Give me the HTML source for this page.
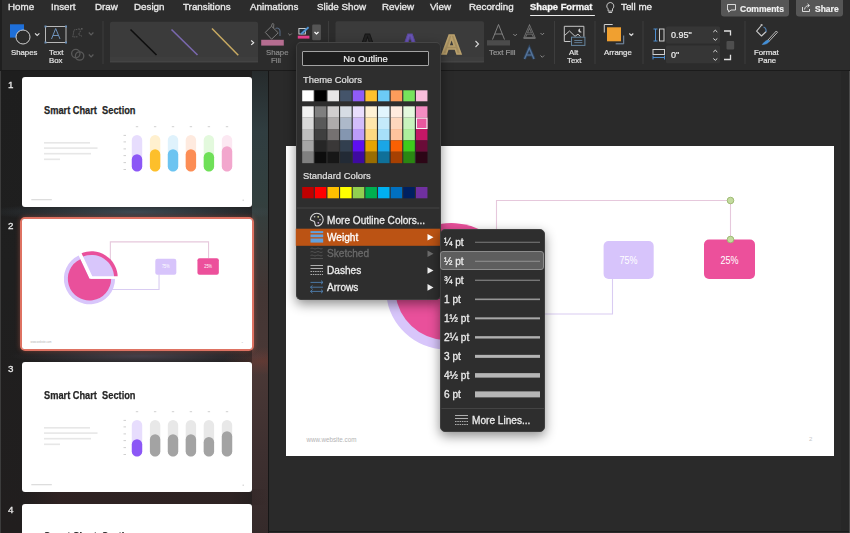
<!DOCTYPE html>
<html><head><meta charset="utf-8">
<style>
*{margin:0;padding:0;box-sizing:border-box}
html,body{width:850px;height:533px;overflow:hidden;background:#2a2a2a;font-family:"Liberation Sans",sans-serif;color:#e6e6e6}
.a{position:absolute}
.t{position:absolute;white-space:nowrap;line-height:1;-webkit-text-stroke:0.2px currentColor}
#top{left:0;top:0;width:850px;height:70px;background:#2c2c2c}
#topline{left:0;top:70px;width:850px;height:1px;background:#1b1b1b}
.tab{position:absolute;top:1.2px;font-size:9.8px;-webkit-text-stroke:0.35px #e8e8e8;color:#e8e8e8;white-space:nowrap;line-height:11px}
#pane{left:0;top:71px;width:268px;height:462px;overflow:hidden;background:
 radial-gradient(ellipse 150px 10px at 135px 141px, rgba(70,88,100,0.75), rgba(0,0,0,0) 100%),
 radial-gradient(ellipse 130px 9px at 140px 285px, rgba(85,78,92,0.7), rgba(0,0,0,0) 100%),
 radial-gradient(ellipse 40px 14px at 262px 290px, rgba(120,60,50,0.5), rgba(0,0,0,0) 100%),
 linear-gradient(90deg, rgba(0,0,0,0) 0, rgba(0,0,0,0) 22px, rgba(48,34,34,0.9) 60px, rgba(48,36,36,0.9) 230px, rgba(0,0,0,0) 268px) 0 418px/268px 16px no-repeat,
 linear-gradient(180deg, #262b2c 0, #303d40 60px, #33403f 130px, #433634 220px, #4a3836 300px, #3e3030 380px, #352a2a 462px) 252px 0/16px 462px no-repeat,
 linear-gradient(180deg, #1e1e1e 0, #1f1f1f 200px, #211e1e 462px)}
#paneline{left:268px;top:71px;width:1px;height:462px;background:#161616}
.thumb{position:absolute;left:22px;width:230px;height:130px;background:#fff;border-radius:3px;overflow:hidden}
.num{position:absolute;left:7.8px;font-size:9.8px;color:#e8e8e8;line-height:1;-webkit-text-stroke:0.3px #e8e8e8}
#slide{left:286px;top:146px;width:548px;height:310px;background:#fff;overflow:hidden}
.mi{font-size:10.1px;-webkit-text-stroke:0.3px currentColor}
.t,.tab,.num{will-change:transform}
</style></head><body>
<div class="a" id="top"></div>
<div class="a" id="topline"></div>
<!-- tabs -->
<div class="tab" style="left:8px">Home</div>
<div class="tab" style="left:51px">Insert</div>
<div class="tab" style="left:95px">Draw</div>
<div class="tab" style="left:134px">Design</div>
<div class="tab" style="left:183px">Transitions</div>
<div class="tab" style="left:250px">Animations</div>
<div class="tab" style="left:317px">Slide Show</div>
<div class="tab" style="left:382px">Review</div>
<div class="tab" style="left:430px">View</div>
<div class="tab" style="left:469px">Recording</div>
<div class="tab" style="left:530.4px;font-weight:bold;color:#fff;font-size:9.35px;top:1.6px">Shape Format</div>
<div class="a" style="left:530px;top:14.7px;width:64.5px;height:1.8px;background:#ececec;border-radius:1px"></div>
<div class="tab" style="left:621px">Tell me</div>

<!-- RIBBON -->
<svg class="a" style="left:0;top:0" width="850" height="70" viewBox="0 0 850 70">
 <!-- separators -->
 <g fill="#3d3d3d">
  <rect x="102.5" y="21" width="1" height="43"/>
  <rect x="328" y="21" width="1" height="43"/>
  <rect x="554" y="21" width="1" height="43"/>
  <rect x="594.5" y="21" width="1" height="43"/>
  <rect x="642.5" y="21" width="1" height="43"/>
  <rect x="744.5" y="21" width="1" height="43"/>
 </g>
 <!-- Comments / Share buttons -->
 <path d="M721 0 H789 V13.5 a3 3 0 0 1 -3 3 H724 a3 3 0 0 1 -3 -3Z" fill="#565656"/>
 <path d="M796 0 H843 V13.5 a3 3 0 0 1 -3 3 H799 a3 3 0 0 1 -3 -3Z" fill="#565656"/>
 <path d="M727.5 4.5 h8 v5.5 h-4.5 l-2.3 2 v-2 h-1.2z" fill="none" stroke="#e8e8e8" stroke-width="0.9"/>
 <path d="M802.5 7 v4.5 h7 v-2.5 M804.5 9.5 c0.5-3 2.5-4 4.5-4 M807.5 3.8 l2 1.7 l-2 1.7" fill="none" stroke="#e8e8e8" stroke-width="0.9"/>
 <!-- lightbulb -->
 <path d="M610.3 2.5 a3.6 3.6 0 0 1 2.2 6.4 v2.2 h-4.4 v-2.2 a3.6 3.6 0 0 1 2.2 -6.4z M608.5 12.5 h3.6" fill="none" stroke="#d8d8d8" stroke-width="0.9"/>

 <!-- Shapes -->
 <rect x="10" y="24.3" width="14" height="13.3" fill="#1e6fd9"/>
 <circle cx="23" cy="37" r="7" fill="#2c2c2c" stroke="#d0d0d0" stroke-width="1"/>
 <path d="M35 33.3 l2.2 2.2 l2.2 -2.2" fill="none" stroke="#e0e0e0" stroke-width="1.1"/>
 <!-- Text box -->
 <rect x="45.5" y="26.5" width="20.5" height="16" fill="none" stroke="#b8b8b8" stroke-width="1"/>
 <g fill="#6a8fb8"><rect x="44.5" y="25.5" width="2" height="2"/><rect x="65" y="25.5" width="2" height="2"/><rect x="44.5" y="41.5" width="2" height="2"/><rect x="65" y="41.5" width="2" height="2"/></g>
 <path d="M51.5 39 L55.7 28.5 L60 39 M53 35.5 h5.4" fill="none" stroke="#6f93bd" stroke-width="1"/>
 <!-- edit shape (disabled) -->
 <path d="M72.8 37 L74 30 L79.5 28.8 M77.5 36.8 L72.8 37 M79.5 28.8 L80.5 31 L78.5 34.5 L82.5 36.5" fill="none" stroke="#585858" stroke-width="1" stroke-dasharray="1.6 0.6"/>
 <rect x="81" y="28" width="1.6" height="1.6" fill="#5a5a5a"/>
 <path d="M88.8 32.5 l2.3 2.3 l2.3 -2.3" fill="none" stroke="#5c5c5c" stroke-width="1.2"/>
 <!-- merge (disabled) -->
 <circle cx="75.8" cy="53.6" r="4.2" fill="none" stroke="#585858" stroke-width="1.3"/>
 <circle cx="79.6" cy="56" r="4.2" fill="none" stroke="#585858" stroke-width="1.3"/>
 <path d="M88.8 54.5 l2.3 2.3 l2.3 -2.3" fill="none" stroke="#5c5c5c" stroke-width="1.2"/>

 <!-- Shape styles gallery -->
 <rect x="110" y="21.8" width="148" height="40.5" rx="2" fill="#3b3b3b"/>
 <rect x="110" y="57" width="148" height="5.3" fill="#3e3e3e"/><rect x="110" y="61.2" width="148" height="1.1" fill="#464646"/>
 <path d="M130.5 29.5 L156.5 55" stroke="#0e0e0e" stroke-width="1.6"/>
 <path d="M171.5 29.5 L197.5 55" stroke="#7a68ae" stroke-width="1.6"/>
 <path d="M212 28.5 L238.3 55.3" stroke="#c8aa62" stroke-width="1.5"/>
 <path d="M251.2 40.5 l2.5 2.2 l-2.5 2.2" fill="none" stroke="#e8e8e8" stroke-width="1.1"/>

 <!-- Shape fill (disabled) -->
 <path d="M265.3 32.4 L271.5 26.2 L278.2 32.8 L271.6 39.2 Z" fill="none" stroke="#7c7c7c" stroke-width="1"/>
 <path d="M271.5 26.2 L272.2 23.8 a1 1 0 0 1 1.6 0.4 L273.6 28" fill="none" stroke="#7c7c7c" stroke-width="0.9"/>
 <path d="M275.5 28.5 a3 3 0 0 1 4.5 2.8 L280 36" fill="none" stroke="#56677e" stroke-width="1.1"/>
 <rect x="261.2" y="39.8" width="22.6" height="5.8" fill="#b56d90"/>
 <path d="M288.2 33.5 l1.8 1.8 l1.8 -1.8" fill="none" stroke="#777" stroke-width="1"/>
 <!-- Shape outline -->
 <rect x="298.9" y="28.5" width="6.5" height="5.5" fill="#20303c" stroke="#d8d8d8" stroke-width="0.9"/>
 <path d="M301.2 34 L308.5 27.3" stroke="#3c7fc0" stroke-width="2.2"/>
 <path d="M301.2 34 L308.5 27.3" stroke="#7ab8e8" stroke-width="0.7"/>
 <rect x="297.8" y="35.7" width="11.6" height="2.9" fill="#e8408f"/>
 <rect x="312.2" y="24.6" width="8.7" height="15.6" rx="1.2" fill="#555"/>
 <path d="M314.5 32 l2 2 l2 -2" fill="none" stroke="#fff" stroke-width="1.2"/>

 <!-- WordArt gallery -->
 <rect x="335.5" y="21.2" width="148.5" height="41.2" rx="2" fill="#3b3b3b"/>
 <rect x="335.5" y="57" width="148.5" height="5.3" fill="#3e3e3e"/><rect x="335.5" y="61.2" width="148.5" height="1.1" fill="#464646"/>
 <text x="367.5" y="53" text-anchor="middle" font-family="Liberation Sans" font-weight="bold" font-size="27" fill="#222" stroke="#151515" stroke-width="0.8">A</text>
 <text x="410" y="53" text-anchor="middle" font-family="Liberation Sans" font-weight="bold" font-size="27" fill="#6a55b5" stroke="#5a48a0" stroke-width="0.8">A</text>
 <text x="451.5" y="53.5" text-anchor="middle" font-family="Liberation Sans" font-weight="bold" font-size="28" fill="#a48d5f" stroke="#b9a06c" stroke-width="1.6">A</text>
 <path d="M475.5 41 l3 3 l-3 3" fill="none" stroke="#d8d8d8" stroke-width="1.1"/>

 <!-- Text fill -->
 <path d="M492.5 39.5 L498.5 24.5 L504.5 39.5 M494.8 34 h7.4" fill="none" stroke="#8a8a8a" stroke-width="0.9"/>
 <rect x="487" y="40.2" width="23" height="5.3" fill="#4b4b4b"/>
 <path d="M513.3 34 l1.8 1.8 l1.8 -1.8" fill="none" stroke="#888" stroke-width="1"/>
 <!-- text outline -->
 <path d="M524.5 38 L529.5 26.5 L534.5 38 M526.5 33.5 h6" fill="none" stroke="#777" stroke-width="2.2"/><path d="M524.5 38 L529.5 26.5 L534.5 38 M526.5 33.5 h6" fill="none" stroke="#2c2c2c" stroke-width="0.7"/>
 <rect x="523.5" y="37" width="12" height="2" fill="#6a6a6a"/>
 <path d="M540.5 33 l1.8 1.8 l1.8 -1.8" fill="none" stroke="#888" stroke-width="1"/>
 <!-- text effects -->
 <path d="M524.5 59 L529.3 48 L534 59 M526.5 55 h5.6" fill="none" stroke="#2e4560" stroke-width="3"/>
 <path d="M524.5 59 L529.3 48 L534 59 M526.5 55 h5.6" fill="none" stroke="#58769c" stroke-width="1.2"/>
 <path d="M540.5 55.5 l1.8 1.8 l1.8 -1.8" fill="none" stroke="#888" stroke-width="1"/>

 <!-- Alt text -->
 <path d="M570.5 41.5 h-6.2 v-15.2 h19.6 v10.5" fill="none" stroke="#c8c8c8" stroke-width="1"/>
 <path d="M564.5 35.5 L569.5 31 L575 36.3 L578 34.2 L580.5 36.5" fill="none" stroke="#c8c8c8" stroke-width="1"/>
 <path d="M580.2 28.6 a2 2 0 1 0 1.6 3.3 a2.2 2.2 0 0 1 -1.6 -3.3z" fill="#d0d0d0"/>
 <rect x="571.5" y="37.2" width="13.4" height="8.2" fill="#2c2c2c" stroke="#66859f" stroke-width="1"/>
 <path d="M574.3 40.5 h8 M574.3 42.6 h8" stroke="#66859f" stroke-width="0.9"/>

 <!-- Arrange -->
 <path d="M604.3 32.5 v-8 h8.4" fill="none" stroke="#cfcfcf" stroke-width="1"/>
 <rect x="607" y="27.3" width="14" height="14" fill="#f0a030"/>
 <path d="M623.7 35.5 v8.3 h-8" fill="none" stroke="#7d93ad" stroke-width="1"/>
 <path d="M629.3 33.5 l2 2 l2 -2" fill="none" stroke="#e0e0e0" stroke-width="1.1"/>

 <!-- size icons -->
 <path d="M653.5 29 h4 M653.5 41 h4 M655.5 29 v12" fill="none" stroke="#4f8fd0" stroke-width="1"/>
 <rect x="659.5" y="29" width="4.5" height="12" fill="none" stroke="#d0d0d0" stroke-width="1"/>
 <rect x="653" y="49.5" width="11.5" height="5" fill="none" stroke="#d0d0d0" stroke-width="1"/>
 <path d="M653 57.5 h11.5 M653 55.5 v4 M664.5 55.5 v4" fill="none" stroke="#4f8fd0" stroke-width="1"/>
 <!-- fields -->
 <rect x="666" y="26.5" width="54" height="17" rx="1.5" fill="#363636"/>
 <rect x="666" y="45.6" width="54" height="17.6" rx="1.5" fill="#363636"/>
 <path d="M713.3 32 l2 -1.8 l2 1.8 M713.3 38.5 l2 1.8 l2 -1.8" fill="none" stroke="#dcdcdc" stroke-width="1"/>
 <path d="M713.3 52 l2 -1.8 l2 1.8 M713.3 58.5 l2 1.8 l2 -1.8" fill="none" stroke="#dcdcdc" stroke-width="1"/>
 <!-- lock -->
 <path d="M724 31 h6.5 v4.6" fill="none" stroke="#e0e0e0" stroke-width="1.3"/>
 <path d="M724 59.5 h6.5 v-4.8" fill="none" stroke="#e0e0e0" stroke-width="1.3"/>
 <rect x="726.5" y="41" width="7.7" height="8.4" rx="1" fill="#4e4e4e"/>

 <!-- Format pane -->
 <path d="M761.3 25.5 L756.6 31.2 L761.5 36 L766.2 31.5" fill="none" stroke="#c8c8c8" stroke-width="1.1" stroke-linejoin="round"/>
 <circle cx="761.6" cy="25" r="1.1" fill="#bdbdbd"/>
 <path d="M763.5 27 q3 1 2.6 5" fill="none" stroke="#4f7fb0" stroke-width="1.2"/>
 <path d="M776.3 31 L767.5 40.5 M777.5 32.3 L768.8 41.6" stroke="#c8c8c8" stroke-width="0.9"/>
 <path d="M776.3 31 l1.2 1.3" stroke="#c8c8c8" stroke-width="0.9"/>
 <path d="M768 40 c-2.5 0.5 -4 2.5 -5.8 4.6 c2.8 0 5.6 -1 7.2 -3.3z" fill="#3f8fdb" stroke="#5aa0e0" stroke-width="0.5"/>
</svg>
<!-- ribbon labels -->
<div class="t" style="left:11px;top:49px;font-size:7.8px;color:#e6e6e6">Shapes</div>
<div class="t" style="left:48.5px;top:49px;font-size:7.8px;color:#e6e6e6">Text</div>
<div class="t" style="left:49px;top:57px;font-size:7.8px;color:#e6e6e6">Box</div>
<div class="t" style="left:266px;top:49px;font-size:7.8px;color:#8a8a8a">Shape</div>
<div class="t" style="left:271px;top:57px;font-size:7.8px;color:#8a8a8a">Fill</div>
<div class="t" style="left:488.5px;top:49px;font-size:7.8px;color:#9a9a9a">Text Fill</div>
<div class="t" style="left:569px;top:49px;font-size:7.8px;color:#e6e6e6">Alt</div>
<div class="t" style="left:567px;top:57px;font-size:7.8px;color:#e6e6e6">Text</div>
<div class="t" style="left:604px;top:49px;font-size:7.8px;color:#e6e6e6">Arrange</div>
<div class="t" style="left:754px;top:49px;font-size:7.8px;color:#e6e6e6">Format</div>
<div class="t" style="left:758px;top:57px;font-size:7.8px;color:#e6e6e6">Pane</div>
<div class="t" style="left:671px;top:30.5px;font-size:9px;color:#f0f0f0">0.95"</div>
<div class="t" style="left:671px;top:50.5px;font-size:9px;color:#f0f0f0">0"</div>
<div class="t" style="left:740px;top:4.6px;font-size:8.5px;font-weight:bold;color:#f0f0f0">Comments</div>
<div class="t" style="left:814.5px;top:4.6px;font-size:8.5px;font-weight:bold;color:#f0f0f0">Share</div>

<div class="a" id="pane"></div>
<div class="a" id="paneline"></div>
<div class="a" style="left:0;top:71px;width:1px;height:462px;background:#3c3c3c"></div>
<div class="a" style="left:0;top:0;width:1.5px;height:70px;background:#1f1f1f"></div>
<div class="num" style="top:79.5px">1</div>
<svg class="a" style="left:22px;top:77px" width="230" height="130" viewBox="0 0 230 130" font-family="Liberation Sans">
<rect width="230" height="130" rx="3" fill="#fff"/>
<text x="22" y="37" font-size="10.8" font-weight="bold" fill="#262626" stroke="#262626" stroke-width="0.25" textLength="91.5" lengthAdjust="spacingAndGlyphs">Smart Chart&#160; Section</text>
<rect x="22" y="65.0" width="46" height="1.6" fill="#d0d0d0" opacity="0.5"/>
<rect x="22" y="70.3" width="53.5" height="1.6" fill="#d0d0d0" opacity="0.5"/>
<rect x="22" y="75.9" width="47" height="1.6" fill="#d0d0d0" opacity="0.5"/>
<rect x="22" y="81.5" width="16" height="1.6" fill="#d0d0d0" opacity="0.5"/>
<rect x="109.8" y="57.9" width="10.4" height="36.7" rx="5.2" fill="#e7ddfd"/>
<rect x="109.8" y="77.3" width="10.4" height="17.3" rx="5.2" fill="#8c57f6"/>
<rect x="113.8" y="49.2" width="2.4" height="1" fill="#d0d0d0"/>
<rect x="127.9" y="57.9" width="10.4" height="36.7" rx="5.2" fill="#fff0cf"/>
<rect x="127.9" y="72.2" width="10.4" height="22.4" rx="5.2" fill="#fdbf2b"/>
<rect x="131.9" y="49.2" width="2.4" height="1" fill="#d0d0d0"/>
<rect x="145.8" y="57.9" width="10.4" height="36.7" rx="5.2" fill="#dff2fc"/>
<rect x="145.8" y="72.2" width="10.4" height="22.4" rx="5.2" fill="#6cc4f1"/>
<rect x="149.8" y="49.2" width="2.4" height="1" fill="#d0d0d0"/>
<rect x="163.7" y="57.9" width="10.4" height="36.7" rx="5.2" fill="#feeadf"/>
<rect x="163.7" y="72.2" width="10.4" height="22.4" rx="5.2" fill="#fc8d55"/>
<rect x="167.7" y="49.2" width="2.4" height="1" fill="#d0d0d0"/>
<rect x="181.7" y="57.9" width="10.4" height="36.7" rx="5.2" fill="#e3f9dd"/>
<rect x="181.7" y="75" width="10.4" height="19.6" rx="5.2" fill="#6fe058"/>
<rect x="185.7" y="49.2" width="2.4" height="1" fill="#d0d0d0"/>
<rect x="199.8" y="57.9" width="10.4" height="36.7" rx="5.2" fill="#fce8f2"/>
<rect x="199.8" y="69.2" width="10.4" height="25.4" rx="5.2" fill="#f2a7cd"/>
<rect x="203.8" y="49.2" width="2.4" height="1" fill="#d0d0d0"/>
<rect x="101.5" y="57.9" width="2.5" height="1" fill="#d0d0d0"/>
<rect x="101.5" y="64.4" width="2.5" height="1" fill="#d0d0d0"/>
<rect x="101.5" y="71.4" width="2.5" height="1" fill="#d0d0d0"/>
<rect x="101.5" y="78.1" width="2.5" height="1" fill="#d0d0d0"/>
<rect x="101.5" y="85.1" width="2.5" height="1" fill="#d0d0d0"/>
<rect x="101.5" y="92.0" width="2.5" height="1" fill="#d0d0d0"/>
<rect x="9.3" y="122" width="20.5" height="1.3" fill="#ddd"/>
<rect x="220.5" y="122.5" width="1.5" height="1.5" fill="#ddd"/>
</svg>
<div class="num" style="top:221.3px">2</div>
<div class="a" style="left:20px;top:217px;width:234px;height:134px;border:2px solid #de7262;border-radius:5px;box-shadow:0 0 5px rgba(220,100,80,0.45)"></div>
<svg class="a" style="left:22px;top:219px;border-radius:2px" width="230" height="130" viewBox="0 0 548 310" preserveAspectRatio="none" font-family="Liberation Sans">
<rect width="548" height="310" fill="#fff"/>
<path d="M210.5 100 V54.5 H444.5 V93.5" fill="none" stroke="#e6c8dc" stroke-width="1.1" vector-effect="non-scaling-stroke"/>
<path d="M200 168 H326.5 V132" fill="none" stroke="#d9ccf2" stroke-width="1.1" vector-effect="non-scaling-stroke"/>
<path d="M160.80 142.50 L221.80 142.50 A61 61 0 1 1 135.02 87.22 Z" fill="#d8c6fb"/>
<path d="M160.80 142.50 L212.40 142.50 A51.6 51.6 0 1 1 138.99 95.73 Z" fill="#e9509b"/>
<path d="M165.60 139.50 L139.19 82.86 A62.5 62.5 0 0 1 228.10 139.50 Z" fill="#e9509b"/>
<path d="M165.60 139.50 L142.86 90.74 A53.8 53.8 0 0 1 219.40 139.50 Z" fill="#d8c6fb"/>
<path d="M137.50 79.23 L165.60 139.50 L232.10 139.50" fill="none" stroke="#fff" stroke-width="6.0" stroke-linejoin="miter"/>
<rect x="317.6" y="95" width="50.1" height="37.9" rx="5" fill="#d7c4fb"/>
<rect x="418" y="93.5" width="51" height="39.5" rx="5" fill="#ec509b"/>
<text x="342.6" y="117.8" text-anchor="middle" font-size="10.6" fill="#fff" textLength="18" lengthAdjust="spacingAndGlyphs">75%</text>
<text x="443.5" y="117.8" text-anchor="middle" font-size="10.6" fill="#fff" textLength="18" lengthAdjust="spacingAndGlyphs">25%</text>
<text x="20.4" y="295.5" font-size="6.6" fill="#b4b4b4" textLength="50" lengthAdjust="spacingAndGlyphs">www.website.com</text>
<text x="523" y="295" font-size="6" fill="#c8c8c8">2</text>
</svg>
<div class="num" style="top:363.5px">3</div>
<svg class="a" style="left:22px;top:361.5px" width="230" height="130" viewBox="0 0 230 130" font-family="Liberation Sans">
<rect width="230" height="130" rx="3" fill="#fff"/>
<text x="22" y="37" font-size="10.8" font-weight="bold" fill="#262626" stroke="#262626" stroke-width="0.25" textLength="91.5" lengthAdjust="spacingAndGlyphs">Smart Chart&#160; Section</text>
<rect x="22" y="65.0" width="46" height="1.6" fill="#d0d0d0" opacity="0.5"/>
<rect x="22" y="70.3" width="53.5" height="1.6" fill="#d0d0d0" opacity="0.5"/>
<rect x="22" y="75.9" width="47" height="1.6" fill="#d0d0d0" opacity="0.5"/>
<rect x="22" y="81.5" width="16" height="1.6" fill="#d0d0d0" opacity="0.5"/>
<rect x="109.8" y="57.9" width="10.4" height="36.7" rx="5.2" fill="#e7ddfd"/>
<rect x="109.8" y="77.3" width="10.4" height="17.3" rx="5.2" fill="#8c57f6"/>
<rect x="113.8" y="49.2" width="2.4" height="1" fill="#d0d0d0"/>
<rect x="127.9" y="57.9" width="10.4" height="36.7" rx="5.2" fill="#e8e8e8"/>
<rect x="127.9" y="72.2" width="10.4" height="22.4" rx="5.2" fill="#a3a3a3"/>
<rect x="131.9" y="49.2" width="2.4" height="1" fill="#d0d0d0"/>
<rect x="145.8" y="57.9" width="10.4" height="36.7" rx="5.2" fill="#e8e8e8"/>
<rect x="145.8" y="72.2" width="10.4" height="22.4" rx="5.2" fill="#a3a3a3"/>
<rect x="149.8" y="49.2" width="2.4" height="1" fill="#d0d0d0"/>
<rect x="163.7" y="57.9" width="10.4" height="36.7" rx="5.2" fill="#e8e8e8"/>
<rect x="163.7" y="72.2" width="10.4" height="22.4" rx="5.2" fill="#a3a3a3"/>
<rect x="167.7" y="49.2" width="2.4" height="1" fill="#d0d0d0"/>
<rect x="181.7" y="57.9" width="10.4" height="36.7" rx="5.2" fill="#e8e8e8"/>
<rect x="181.7" y="75" width="10.4" height="19.6" rx="5.2" fill="#a3a3a3"/>
<rect x="185.7" y="49.2" width="2.4" height="1" fill="#d0d0d0"/>
<rect x="199.8" y="57.9" width="10.4" height="36.7" rx="5.2" fill="#e8e8e8"/>
<rect x="199.8" y="69.2" width="10.4" height="25.4" rx="5.2" fill="#a3a3a3"/>
<rect x="203.8" y="49.2" width="2.4" height="1" fill="#d0d0d0"/>
<rect x="101.5" y="57.9" width="2.5" height="1" fill="#d0d0d0"/>
<rect x="101.5" y="64.4" width="2.5" height="1" fill="#d0d0d0"/>
<rect x="101.5" y="71.4" width="2.5" height="1" fill="#d0d0d0"/>
<rect x="101.5" y="78.1" width="2.5" height="1" fill="#d0d0d0"/>
<rect x="101.5" y="85.1" width="2.5" height="1" fill="#d0d0d0"/>
<rect x="101.5" y="92.0" width="2.5" height="1" fill="#d0d0d0"/>
<rect x="9.3" y="122" width="20.5" height="1.3" fill="#ddd"/>
<rect x="220.5" y="122.5" width="1.5" height="1.5" fill="#ddd"/>
</svg>
<div class="num" style="top:505.3px">4</div>
<svg class="a" style="left:22px;top:504px" width="230" height="130" viewBox="0 0 230 130" font-family="Liberation Sans"><rect width="230" height="130" rx="3" fill="#fff"/><text x="22" y="36" font-size="10.8" font-weight="bold" fill="#262626" stroke="#262626" stroke-width="0.25" textLength="91.5" lengthAdjust="spacingAndGlyphs">Smart Chart&#160; Section</text></svg>

<svg class="a" style="left:286px;top:146px" width="548" height="310" viewBox="0 0 548 310" font-family="Liberation Sans">
<rect width="548" height="310" fill="#fff"/>
<path d="M210.5 100 V54.5 H444.5 V93.5" fill="none" stroke="#e6c8dc" stroke-width="1.1" vector-effect="non-scaling-stroke"/>
<path d="M200 168 H326.5 V132" fill="none" stroke="#d9ccf2" stroke-width="1.1" vector-effect="non-scaling-stroke"/>
<path d="M160.80 142.50 L221.80 142.50 A61 61 0 1 1 135.02 87.22 Z" fill="#d8c6fb"/>
<path d="M160.80 142.50 L212.40 142.50 A51.6 51.6 0 1 1 138.99 95.73 Z" fill="#e9509b"/>
<path d="M165.60 139.50 L139.19 82.86 A62.5 62.5 0 0 1 228.10 139.50 Z" fill="#e9509b"/>
<path d="M165.60 139.50 L142.86 90.74 A53.8 53.8 0 0 1 219.40 139.50 Z" fill="#d8c6fb"/>
<path d="M137.50 79.23 L165.60 139.50 L232.10 139.50" fill="none" stroke="#fff" stroke-width="6.0" stroke-linejoin="miter"/>
<rect x="317.6" y="95" width="50.1" height="37.9" rx="5" fill="#d7c4fb"/>
<rect x="418" y="93.5" width="51" height="39.5" rx="5" fill="#ec509b"/>
<text x="342.6" y="117.8" text-anchor="middle" font-size="10.6" fill="#fff" textLength="18" lengthAdjust="spacingAndGlyphs">75%</text>
<text x="443.5" y="117.8" text-anchor="middle" font-size="10.6" fill="#fff" textLength="18" lengthAdjust="spacingAndGlyphs">25%</text>
<text x="20.4" y="295.5" font-size="6.6" fill="#b4b4b4" textLength="50" lengthAdjust="spacingAndGlyphs">www.website.com</text>
<text x="523" y="295" font-size="6" fill="#c8c8c8">2</text>
<circle cx="444.5" cy="54.5" r="3.3" fill="#c3db9e" stroke="#98b56c" stroke-width="0.9"/><circle cx="444.5" cy="93.5" r="3.3" fill="#c3db9e" stroke="#98b56c" stroke-width="0.9"/>
</svg>

<!-- MENU 1 -->
<div class="a" style="left:295.5px;top:41.5px;width:145px;height:258px;background:#2e2e2e;border:1px solid #3f3f3f;border-top-color:#454545;border-radius:5px;box-shadow:0 4px 12px rgba(0,0,0,0.45)"></div>
<div class="a" style="left:302px;top:51px;width:127px;height:15.3px;background:#1d1d1d;border:1.4px solid #a3a3a3;border-radius:1px"></div>
<div class="t" style="left:302px;top:54px;width:127px;text-align:center;font-size:9.4px;color:#f0f0f0">No Outline</div>
<div class="t" style="left:303px;top:74.5px;font-size:9.4px;color:#e0e0e0">Theme Colors</div>
<svg class="a" style="left:0;top:0" width="850" height="533">
<rect x="302.20" y="90.3" width="11.5" height="11" fill="#ffffff"/>
<rect x="314.84" y="90.3" width="11.5" height="11" fill="#000000"/>
<rect x="327.48" y="90.3" width="11.5" height="11" fill="#e7e6e6"/>
<rect x="340.12" y="90.3" width="11.5" height="11" fill="#44546a"/>
<rect x="352.76" y="90.3" width="11.5" height="11" fill="#8f5cf7"/>
<rect x="365.40" y="90.3" width="11.5" height="11" fill="#fdc12d"/>
<rect x="378.04" y="90.3" width="11.5" height="11" fill="#6ccbf6"/>
<rect x="390.68" y="90.3" width="11.5" height="11" fill="#fd9c5b"/>
<rect x="403.32" y="90.3" width="11.5" height="11" fill="#77e35c"/>
<rect x="415.96" y="90.3" width="11.5" height="11" fill="#f8bddb"/>
<rect x="302.20" y="106.30" width="11.5" height="11.41" fill="#f2f2f2"/>
<rect x="302.20" y="117.66" width="11.5" height="11.41" fill="#d9d9d9"/>
<rect x="302.20" y="129.02" width="11.5" height="11.41" fill="#bfbfbf"/>
<rect x="302.20" y="140.38" width="11.5" height="11.41" fill="#a6a6a6"/>
<rect x="302.20" y="151.74" width="11.5" height="11.41" fill="#808080"/>
<rect x="314.84" y="106.30" width="11.5" height="11.41" fill="#7f7f7f"/>
<rect x="314.84" y="117.66" width="11.5" height="11.41" fill="#595959"/>
<rect x="314.84" y="129.02" width="11.5" height="11.41" fill="#3f3f3f"/>
<rect x="314.84" y="140.38" width="11.5" height="11.41" fill="#262626"/>
<rect x="314.84" y="151.74" width="11.5" height="11.41" fill="#0d0d0d"/>
<rect x="327.48" y="106.30" width="11.5" height="11.41" fill="#d0cece"/>
<rect x="327.48" y="117.66" width="11.5" height="11.41" fill="#aeabab"/>
<rect x="327.48" y="129.02" width="11.5" height="11.41" fill="#757171"/>
<rect x="327.48" y="140.38" width="11.5" height="11.41" fill="#3a3838"/>
<rect x="327.48" y="151.74" width="11.5" height="11.41" fill="#171717"/>
<rect x="340.12" y="106.30" width="11.5" height="11.41" fill="#d6dce4"/>
<rect x="340.12" y="117.66" width="11.5" height="11.41" fill="#adb9ca"/>
<rect x="340.12" y="129.02" width="11.5" height="11.41" fill="#8496b0"/>
<rect x="340.12" y="140.38" width="11.5" height="11.41" fill="#323f4f"/>
<rect x="340.12" y="151.74" width="11.5" height="11.41" fill="#222a35"/>
<rect x="352.76" y="106.30" width="11.5" height="11.41" fill="#e9defd"/>
<rect x="352.76" y="117.66" width="11.5" height="11.41" fill="#d2bdfb"/>
<rect x="352.76" y="129.02" width="11.5" height="11.41" fill="#bc9cfa"/>
<rect x="352.76" y="140.38" width="11.5" height="11.41" fill="#5e0ff0"/>
<rect x="352.76" y="151.74" width="11.5" height="11.41" fill="#3e0aa0"/>
<rect x="365.40" y="106.30" width="11.5" height="11.41" fill="#fff2d5"/>
<rect x="365.40" y="117.66" width="11.5" height="11.41" fill="#ffe6ab"/>
<rect x="365.40" y="129.02" width="11.5" height="11.41" fill="#fed981"/>
<rect x="365.40" y="140.38" width="11.5" height="11.41" fill="#e6a402"/>
<rect x="365.40" y="151.74" width="11.5" height="11.41" fill="#996d01"/>
<rect x="378.04" y="106.30" width="11.5" height="11.41" fill="#e1f5fd"/>
<rect x="378.04" y="117.66" width="11.5" height="11.41" fill="#c4eafb"/>
<rect x="378.04" y="129.02" width="11.5" height="11.41" fill="#a7e0fa"/>
<rect x="378.04" y="140.38" width="11.5" height="11.41" fill="#1aa6e6"/>
<rect x="378.04" y="151.74" width="11.5" height="11.41" fill="#0f7099"/>
<rect x="390.68" y="106.30" width="11.5" height="11.41" fill="#ffebde"/>
<rect x="390.68" y="117.66" width="11.5" height="11.41" fill="#fed7bd"/>
<rect x="390.68" y="129.02" width="11.5" height="11.41" fill="#fec39d"/>
<rect x="390.68" y="140.38" width="11.5" height="11.41" fill="#f96003"/>
<rect x="390.68" y="151.74" width="11.5" height="11.41" fill="#a64002"/>
<rect x="403.32" y="106.30" width="11.5" height="11.41" fill="#e4f9de"/>
<rect x="403.32" y="117.66" width="11.5" height="11.41" fill="#c9f3be"/>
<rect x="403.32" y="129.02" width="11.5" height="11.41" fill="#adee9d"/>
<rect x="403.32" y="140.38" width="11.5" height="11.41" fill="#3ecb1c"/>
<rect x="403.32" y="151.74" width="11.5" height="11.41" fill="#2a8712"/>
<rect x="415.96" y="106.30" width="11.5" height="11.41" fill="#f38cc2"/>
<rect x="415.96" y="117.66" width="11.5" height="11.41" fill="#e8589f"/>
<rect x="415.96" y="129.02" width="11.5" height="11.41" fill="#c41766"/>
<rect x="415.96" y="140.38" width="11.5" height="11.41" fill="#6a0c38"/>
<rect x="415.96" y="151.74" width="11.5" height="11.41" fill="#2c0616"/>
<rect x="416.46" y="118.16" width="10.5" height="10.36" fill="none" stroke="#f4f4f4" stroke-width="1"/>
<rect x="302.20" y="187" width="11.5" height="11.3" fill="#c00000"/>
<rect x="314.84" y="187" width="11.5" height="11.3" fill="#ff0000"/>
<rect x="327.48" y="187" width="11.5" height="11.3" fill="#ffc000"/>
<rect x="340.12" y="187" width="11.5" height="11.3" fill="#ffff00"/>
<rect x="352.76" y="187" width="11.5" height="11.3" fill="#92d050"/>
<rect x="365.40" y="187" width="11.5" height="11.3" fill="#00b050"/>
<rect x="378.04" y="187" width="11.5" height="11.3" fill="#00b0f0"/>
<rect x="390.68" y="187" width="11.5" height="11.3" fill="#0070c0"/>
<rect x="403.32" y="187" width="11.5" height="11.3" fill="#002060"/>
<rect x="415.96" y="187" width="11.5" height="11.3" fill="#7030a0"/>
<rect x="296.5" y="207.5" width="143" height="1" fill="#444"/>
<rect x="295.8" y="228.7" width="144.4" height="17.1" fill="#bb5314"/>
<path d="M310.4 219.6 C311.6 221.2 313.8 220.3 314.6 222 C315.2 223.6 314.3 225.8 316.6 226 A6.4 6.4 0 1 0 310.4 219.6 Z" fill="none" stroke="#d8d8d8" stroke-width="1.1"/><circle cx="314.6" cy="216.8" r="0.8" fill="#cfcfcf"/><circle cx="318.2" cy="216.8" r="0.9" fill="#d8d8a0"/><circle cx="320" cy="219.8" r="0.8" fill="#b8b8c8"/><circle cx="318.3" cy="222.8" r="0.9" fill="#c8a8d8"/>
<g fill="#62a0dc"><rect x="310.5" y="231.1" width="12.7" height="2"/><rect x="310.5" y="234.5" width="12.7" height="2.7"/><rect x="310.5" y="238.5" width="12.7" height="4.1"/></g>
<path d="M310.5 248.5 q1.5 -1 3 0 t3 0 t3 0 t3 0 M310.5 252 q1.5 -1 3 0 t3 0 t3 0 t3 0 M310.5 255.5 q1.5 -1 3 0 t3 0 t3 0 t3 0 M310.5 258.5 h12.5" fill="none" stroke="#5a5a5a" stroke-width="0.8"/>
<path d="M310.5 265.5 h12.5 M310.5 268.5 h12.5" stroke="#cfcfcf" stroke-width="0.8" fill="none"/><path d="M310.5 271.5 h12.5 M310.5 274.5 h12.5" stroke="#cfcfcf" stroke-width="0.8" stroke-dasharray="1.5 0.8" fill="none"/>
<path d="M310.5 282.4 h12.5 M310.5 287.2 h12.5 M310.5 291.4 h12.5" stroke="#4f80b0" stroke-width="0.9" fill="none"/><path d="M321 280.6 l2 1.8 l-2 1.8 M312.5 285.4 l-2 1.8 l2 1.8 M321 289.6 l2 1.8 l-2 1.8 M312.5 289.6 l-2 1.8 l2 1.8" stroke="#4f80b0" stroke-width="0.9" fill="none"/>
<path d="M427.5 233.9 L433.5 237.2 L427.5 240.5Z" fill="#ffffff"/>
<path d="M427.5 250.4 L433.5 253.7 L427.5 257.0Z" fill="#6a6a6a"/>
<path d="M427.5 267.2 L433.5 270.5 L427.5 273.8Z" fill="#f0f0f0"/>
<path d="M427.5 284.1 L433.5 287.4 L427.5 290.7Z" fill="#f0f0f0"/>
</svg>
<div class="t mi" style="left:326.5px;top:215.5px;color:#ececec">More Outline Colors...</div>
<div class="t mi" style="left:326.5px;top:232.7px;color:#ffffff">Weight</div>
<div class="t mi" style="left:326.5px;top:249.2px;color:#6a6a6a">Sketched</div>
<div class="t mi" style="left:326.5px;top:266.0px;color:#ececec">Dashes</div>
<div class="t mi" style="left:326.5px;top:282.9px;color:#ececec">Arrows</div>
<div class="t" style="left:302.5px;top:171px;font-size:9.4px;color:#e0e0e0">Standard Colors</div>
<!-- SUBMENU -->
<div class="a" style="left:440px;top:228.7px;width:104.8px;height:203px;background:#2e2e2e;border:1px solid #3f3f3f;border-radius:5px;box-shadow:0 4px 12px rgba(0,0,0,0.45)"></div>
<div class="a" style="left:440.3px;top:251.4px;width:103.7px;height:18.2px;background:#5e5e5e;border:1px solid #8c8c8c;border-radius:3px"></div>
<svg class="a" style="left:0;top:0" width="850" height="533">
<rect x="475" y="241.70" width="65" height="1.2" fill="#6f6f6f"/>
<rect x="475" y="260.71" width="65" height="1.2" fill="#8a8a8a"/>
<rect x="475" y="279.62" width="65" height="1.4" fill="#777"/>
<rect x="475" y="298.53" width="65" height="1.6" fill="#979797"/>
<rect x="475" y="317.34" width="65" height="2" fill="#a8a8a8"/>
<rect x="475" y="336.15" width="65" height="2.4" fill="#b0b0b0"/>
<rect x="475" y="354.86" width="65" height="3" fill="#b4b4b4"/>
<rect x="475" y="373.12" width="65" height="4.5" fill="#b6b6b6"/>
<rect x="475" y="391.38" width="65" height="6" fill="#b6b6b6"/>
<rect x="441.5" y="408" width="102.5" height="1" fill="#444"/>
<path d="M455 415.5 h13 M455 418.5 h13" stroke="#cfcfcf" stroke-width="0.8" fill="none"/><path d="M455 421.5 h13 M455 424.5 h13" stroke="#cfcfcf" stroke-width="0.8" stroke-dasharray="1.5 0.8" fill="none"/>
</svg>
<div class="t mi" style="left:443.8px;top:237.8px;color:#ececec">¼ pt</div>
<div class="t mi" style="left:443.8px;top:256.8px;color:#ececec">½ pt</div>
<div class="t mi" style="left:443.8px;top:275.8px;color:#ececec">¾ pt</div>
<div class="t mi" style="left:443.8px;top:294.8px;color:#ececec">1 pt</div>
<div class="t mi" style="left:443.8px;top:313.8px;color:#ececec">1½ pt</div>
<div class="t mi" style="left:443.8px;top:332.9px;color:#ececec">2¼ pt</div>
<div class="t mi" style="left:443.8px;top:351.9px;color:#ececec">3 pt</div>
<div class="t mi" style="left:443.8px;top:370.9px;color:#ececec">4½ pt</div>
<div class="t mi" style="left:443.8px;top:389.9px;color:#ececec">6 pt</div>
<div class="t mi" style="left:471.6px;top:415.8px;color:#ececec">More Lines...</div>
<div class="a" style="left:268px;top:530.5px;width:582px;height:1.5px;background:#1b1b1b"></div>
<div class="a" style="left:841px;top:71px;width:8px;height:459.5px;background:#272727"></div>
<div class="a" style="left:849px;top:71px;width:1px;height:462px;background:#4a4a4a"></div>
</body></html>
